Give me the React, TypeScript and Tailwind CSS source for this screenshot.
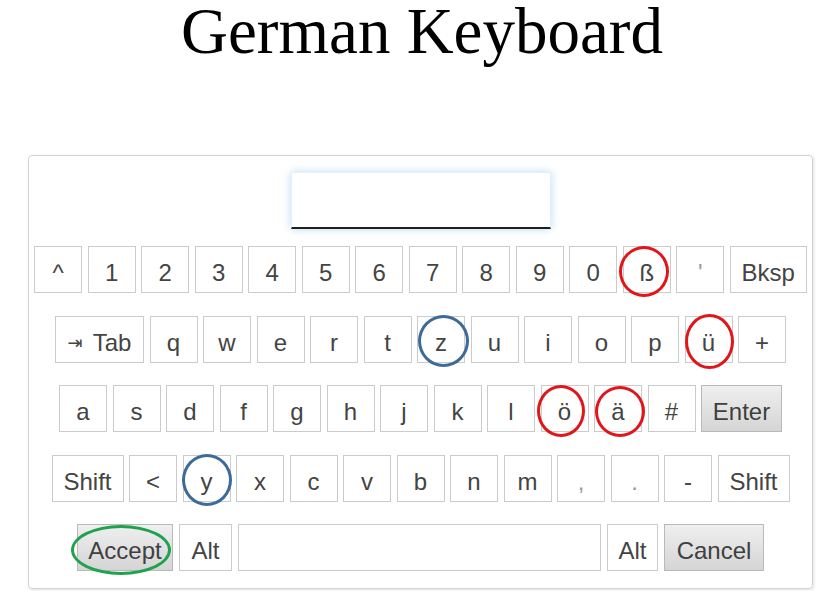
import React from "react";

type K = {
  label: React.ReactNode;
  w?: number;
  gray?: boolean;
  light?: boolean;
  mark?: { color: string; left: number; top: number; w: number; h: number };
};

const RED = "#e0161b";
const BLUE = "#3c6a99";
const GREEN = "#1fa24e";

const Key = ({ k }: { k: K }) => (
  <div
    className={
      "relative flex shrink-0 items-center justify-center h-[47px] pt-[7px] border text-[24px] leading-[24px] " +
      (k.gray
        ? "bg-gradient-to-b from-[#efefef] to-[#d5d5d5] border-[#b9b9b9] text-[#3f3f3f]"
        : "bg-white border-[#cbcbcb] " + (k.light ? "text-[#9a9a9a]" : "text-[#444444]"))
    }
    style={{ width: k.w ?? 48, fontFamily: '"Liberation Sans", Arial, sans-serif' }}
  >
    {k.label}
    {k.mark && (
      <div
        className="pointer-events-none absolute rounded-[50%] border-[3px]"
        style={{
          borderColor: k.mark.color,
          left: k.mark.left,
          top: k.mark.top,
          width: k.mark.w,
          height: k.mark.h,
        }}
      />
    )}
  </div>
);

const Row = ({ keys, gap = 5.5 }: { keys: K[]; gap?: number }) => (
  <div className="flex justify-center" style={{ gap }}>
    {keys.map((k, i) => (
      <Key key={i} k={k} />
    ))}
  </div>
);

const s = (l: string): K => ({ label: l });

export default function App() {
  const row1: K[] = [
    ...["^", "1", "2", "3", "4", "5", "6", "7", "8", "9", "0"].map(s),
    { label: "ß", mark: { color: RED, left: -5, top: -1, w: 50, h: 51 } },
    { label: "'", light: true },
    { label: "Bksp", w: 77 },
  ];
  const row2: K[] = [
    {
      label: (
        <span className="flex items-center">
          <span
            className="text-[18px] mr-[10px] mt-[1px]"
            style={{ fontFamily: '"DejaVu Sans", sans-serif' }}
          >
            ⇥
          </span>
          Tab
        </span>
      ),
      w: 89,
    },
    ...["q", "w", "e", "r", "t"].map(s),
    { label: "z", mark: { color: BLUE, left: 0, top: -2, w: 51, h: 52 } },
    ...["u", "i", "o", "p"].map(s),
    { label: "ü", mark: { color: RED, left: -1, top: -3, w: 49, h: 55 } },
    s("+"),
  ];
  const row3: K[] = [
    ...["a", "s", "d", "f", "g", "h", "j", "k", "l"].map(s),
    { label: "ö", mark: { color: RED, left: -5, top: -1, w: 48, h: 52 } },
    { label: "ä", mark: { color: RED, left: 0, top: 0, w: 50, h: 51 } },
    s("#"),
    { label: "Enter", w: 81, gray: true },
  ];
  const row4: K[] = [
    { label: "Shift", w: 72 },
    s("<"),
    { label: "y", mark: { color: BLUE, left: -2, top: -2, w: 50, h: 52 } },
    ...["x", "c", "v", "b", "n", "m"].map(s),
    { label: ",", light: true },
    { label: ".", light: true },
    s("-"),
    { label: "Shift", w: 72 },
  ];
  const row5: K[] = [
    {
      label: "Accept",
      w: 96,
      gray: true,
      mark: { color: GREEN, left: -7, top: 0, w: 100, h: 50 },
    },
    { label: "Alt", w: 53 },
    { label: "", w: 363 },
    { label: "Alt", w: 51 },
    { label: "Cancel", w: 100, gray: true },
  ];

  return (
    <div className="w-[819px] h-[591px] bg-white overflow-hidden">
      <div className="h-[155px] flex justify-center pl-[25px]">
        <h1
          className="text-[65px] leading-[56px] mt-[3px] h-[56px] text-black"
          style={{ fontFamily: '"Liberation Serif", "Times New Roman", serif' }}
        >
          German Keyboard
        </h1>
      </div>
      <div className="ml-[28px] w-[785px] h-[434px] border border-[#d2d2d2] rounded-[4px] shadow-[1px_1px_3px_rgba(0,0,0,0.12)] flex flex-col items-stretch pt-[16px]">
        <div className="flex justify-center">
          <div className="w-[260px] h-[57px] bg-white border border-[#e6eef7] border-b-2 border-b-[#1f1f1f] shadow-[0_0_8px_rgba(102,175,233,0.45)]" />
        </div>
        <div className="flex flex-col gap-[22.5px] mt-[17px]">
          <Row keys={row1} />
          <Row keys={row2} />
          <Row keys={row3} />
          <Row keys={row4} />
          <div className="flex justify-center gap-[6px]">
            {row5.map((k, i) => (
              <Key key={i} k={k} />
            ))}
          </div>
        </div>
      </div>
    </div>
  );
}
